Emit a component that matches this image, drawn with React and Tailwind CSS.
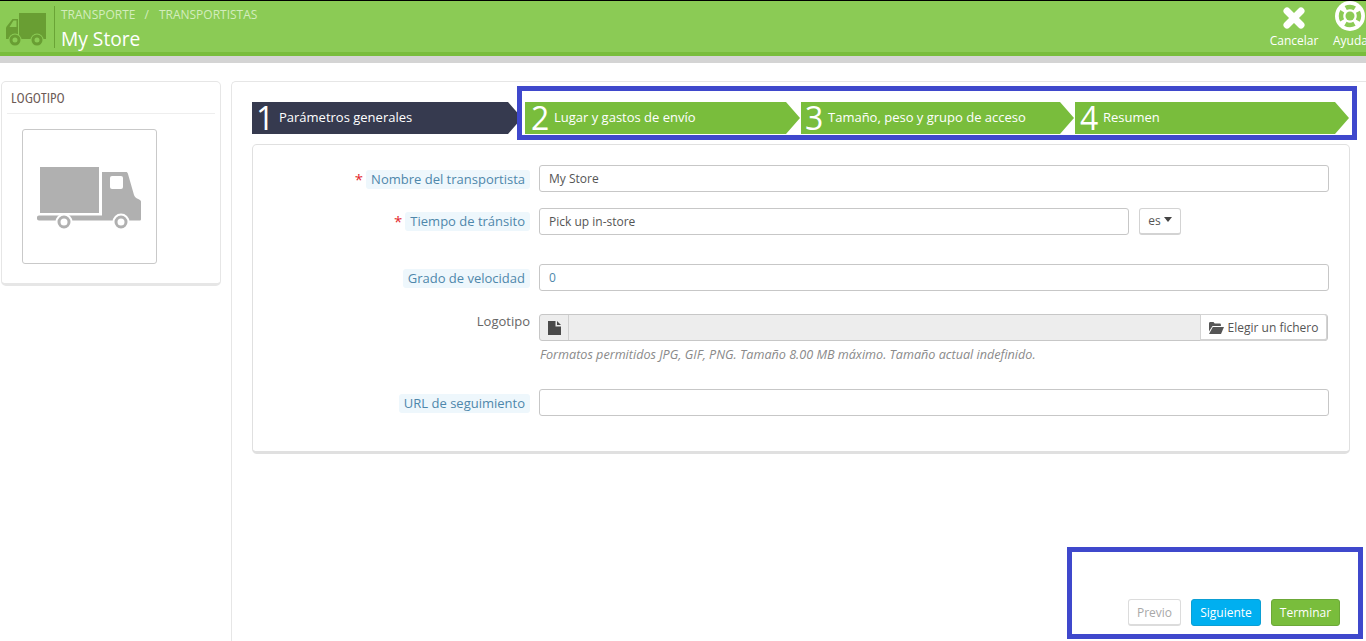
import React from 'react';
import { X } from 'lucide-react';

const Truck = ({ className }) => (
  <svg viewBox="0 0 41 33" className={className}>
    <path fill="#699e33" d="M13 0h27v26H13z" />
    <path fill="#699e33" fillRule="evenodd" d="M12 6H6.500L1 13c-.500.800-1 1.500-1 2.500V26h12V6zM10.500 7.500V14H3.500l4-6.500h3z" />
    <circle cx="9" cy="27" r="6.500" fill="#8bcb55" />
    <circle cx="31" cy="27" r="6.500" fill="#8bcb55" />
    <circle cx="9" cy="27" r="4" fill="none" stroke="#699e33" strokeWidth="3" />
    <circle cx="31" cy="27" r="4" fill="none" stroke="#699e33" strokeWidth="3" />
  </svg>
);

const BigTruck = () => (
  <svg viewBox="0 0 104 64" className="w-[104px] h-[64px] text-[#b0b0b0] mt-[5px] -ml-px" fill="currentColor">
    <path d="M3 0h59v46H3z" />
    <path d="M0 50.500c0-1.200.800-2 2-2h63V5h24c1 0 1.500.500 2 2l6 21c.500 1.500 1.500 2.500 3 3.500 1.500.8 4 1.500 4 3v17.500c0 1-.500 1.500-1.500 1.500H2c-1.200 0-2-.800-2-2z" />
    <rect x="73" y="9" width="13" height="13" rx="2" fill="#fff" />
    <circle cx="27" cy="55" r="8.500" fill="#fff" />
    <circle cx="27" cy="55" r="5" fill="none" stroke="currentColor" strokeWidth="3" />
    <circle cx="84" cy="55" r="8.500" fill="#fff" />
    <circle cx="84" cy="55" r="5" fill="none" stroke="currentColor" strokeWidth="3" />
  </svg>
);

const Buoy = () => (
  <svg viewBox="0 0 30 30" className="w-[30px] h-[30px]">
    <circle cx="15" cy="15" r="15" fill="#fff" />
    <circle cx="15" cy="15" r="9" fill="none" stroke="#8bcb55" strokeWidth="4.500" strokeDasharray="9.500 4.640" strokeDashoffset="4.750" />
    <circle cx="15" cy="15" r="4.500" fill="#8bcb55" />
  </svg>
);

const FileIcon = () => (
  <svg viewBox="0 0 13 14" className="w-[13px] h-[14px]" fill="#4a4a4a">
    <path d="M0 0h7.500v5.500H13V14H0z" />
    <path d="M9 0l4 4H9z" />
  </svg>
);

const FolderIcon = () => (
  <svg viewBox="0 0 15 12" className="w-[15px] h-[12px]" fill="#555">
    <path d="M0 1.500C0 .700.500 0 1.300 0h3.200l1.200 1.500h5c.700 0 1.200.500 1.200 1.200V4H3.500L0 9.500z" />
    <path d="M3.800 5H15l-3 7H0z" />
  </svg>
);

const Step = ({ num, label, dark, className }) => (
  <div
    className={`h-8 flex items-center [clip-path:polygon(0_0,calc(100%-14px)_0,100%_50%,calc(100%-14px)_100%,0_100%)] ${dark ? 'bg-[#363a4f]' : 'bg-[#79bd3c]'} ${className}`}
  >
    <span className="text-[32px] leading-8 text-white w-[23px]">{num}</span>
    <span className="text-[13px] text-white">{label}</span>
  </div>
);

const FieldLabel = ({ required, children, className = '' }) => (
  <div className={`w-[277px] shrink-0 flex justify-end items-center gap-[3px] ${className}`}>
    {required && <span className="text-[#e4282f] text-[15px] leading-none">*</span>}
    <span className="bg-[#eef7fc] text-[#4e87ab] text-[13px] leading-[19px] px-[5px] rounded-[3px]">{children}</span>
  </div>
);

const TextBox = ({ value, className }) => (
  <div className={`h-[27px] border border-[#c7c7c7] rounded-[3px] px-[9px] text-xs leading-[25px] ${className}`}>
    {value}
  </div>
);

const App = () => {
  return (
    <div className="relative w-[1366px] h-[641px] overflow-hidden bg-white font-['Open_Sans',sans-serif]">
      {/* Header */}
      <div className="h-[63px] border-t border-black bg-[#d4d4d4]">
        <div className="h-[55px] bg-[#8bcb55] border-b-4 border-[#79bd3c] flex items-center pl-[6px]">
          <Truck className="w-[41px] h-[33px] mt-[5px]" />
          <div className="ml-[7px] h-[42px] border-l border-[#6aa436] pl-[6px]">
            <div className="flex text-xs leading-4 text-[#d3edbd] mt-[1px]">
              <span>TRANSPORTE</span>
              <span className="ml-[9px] mr-[10px]">/</span>
              <span>TRANSPORTISTAS</span>
            </div>
            <div className="text-[19.2px] leading-[26px] text-white mt-[3px]">My Store</div>
          </div>
          <div className="ml-auto -mr-px flex items-start text-white text-xs leading-4">
            <div className="flex flex-col items-center w-[50px]">
              <X className="w-[28px] h-[28px] -mt-[1px]" strokeWidth={6} />
              <span className="mt-px">Cancelar</span>
            </div>
            <div className="flex flex-col items-center w-[34px] ml-[14px] -mt-[4px]">
              <Buoy />
              <span className="mt-[2px] ml-[1px]">Ayuda</span>
            </div>
          </div>
        </div>
      </div>

      <div className="flex pt-[18px] pl-px h-[578px]">
        {/* Left panel */}
        <div className="w-[220px] h-[205px] shrink-0 border border-[#e6e6e6] border-b-[3px] rounded-[5px] px-[5px]">
          <div className="h-[32px] border-b border-[#eeeeee] pl-[4px] text-[#6c5a56] text-[15px] leading-[30px] [font-stretch:75%]">
            LOGOTIPO
          </div>
          <div className="w-[135px] h-[135px] ml-[15px] mt-[15px] border border-[#c9c9c9] rounded-[3px] flex items-center justify-center">
            <BigTruck />
          </div>
        </div>

        {/* Main panel */}
        <div className="ml-[10px] flex-1 border-l border-t border-[#e6e6e6] rounded-tl-[5px] pl-[20px] pt-[20px] flex flex-col">
          <div className="flex">
            <Step num="1" label="Parámetros generales" dark className="w-[270px] pl-[4px]" />
            <Step num="2" label="Lugar y gastos de envío" className="w-[275px] ml-[3px] pl-[6px]" />
            <Step num="3" label="Tamaño, peso y grupo de acceso" className="w-[273px] ml-[1px] pl-[4px]" />
            <Step num="4" label="Resumen" className="w-[274px] ml-[1px] pl-[5px]" />
          </div>

          <div className="w-[1098px] h-[310px] mt-[10px] border border-[#e0e0e0] border-b-[3px] rounded-[5px] pt-5 flex flex-col">
            <div className="flex items-center h-[27px]">
              <FieldLabel required className="mt-[1px]">Nombre del transportista</FieldLabel>
              <TextBox value="My Store" className="ml-[9px] w-[790px] text-[#555]" />
            </div>
            <div className="flex items-center h-[27px] mt-[16px]">
              <FieldLabel required>Tiempo de tránsito</FieldLabel>
              <TextBox value="Pick up in-store" className="ml-[9px] w-[590px] text-[#555]" />
              <div className="ml-[10px] w-[42px] h-[27px] border border-[#d3d3d3] border-b-[2px] rounded-[3px] flex items-center justify-center text-xs text-[#555] gap-[3px]">
                es
                <span className="w-0 h-0 mb-[3px] border-x-[4px] border-x-transparent border-t-[5px] border-t-[#444]" />
              </div>
            </div>
            <div className="flex items-center h-[27px] mt-[29px]">
              <FieldLabel className="mt-[1px]">Grado de velocidad</FieldLabel>
              <TextBox value="0" className="ml-[9px] w-[790px] text-[#4e87ab]" />
            </div>
            <div className="flex mt-[23px]">
              <div className="w-[277px] shrink-0 text-right text-[13px] leading-[19px] text-[#666] -mt-[2px]">Logotipo</div>
              <div className="ml-[9px]">
                <div className="flex w-[789px] h-[27px] border border-[#c7c7c7] rounded-[3px] bg-[#ededed]">
                  <div className="w-[29px] border-r border-[#d0d0d0] flex items-center justify-center">
                    <FileIcon />
                  </div>
                  <div className="flex-1" />
                  <div className="w-[127px] -my-px pt-px bg-white border border-[#d3d3d3] border-b-[2px] rounded-r-[3px] flex items-center justify-center gap-[4px] text-xs text-[#555]">
                    <FolderIcon />
                    Elegir un fichero
                  </div>
                </div>
                <div className="mt-[6px] text-[12.6px] leading-4 italic text-[#8a8a8a] pl-px">
                  Formatos permitidos JPG, GIF, PNG. Tamaño 8.00 MB máximo. Tamaño actual indefinido.
                </div>
              </div>
            </div>
            <div className="flex items-center h-[27px] mt-[26px]">
              <FieldLabel className="mt-[1px]">URL de seguimiento</FieldLabel>
              <TextBox className="ml-[9px] w-[790px]" />
            </div>
          </div>

          <div className="mt-[145px] flex justify-end gap-[10px] pr-[26px] text-xs">
            <div className="w-[53px] h-[27px] pt-px border border-[#dcdcdc] border-b-[2px] rounded-[3px] text-[#a8a8a8] flex items-center justify-center">Previo</div>
            <div className="w-[70px] h-[27px] pt-px border border-[#0b9fd4] rounded-[3px] bg-[#00aff0] text-white flex items-center justify-center">Siguiente</div>
            <div className="w-[69px] h-[27px] pt-px border border-[#6ca838] rounded-[3px] bg-[#79bd3c] text-white flex items-center justify-center">Terminar</div>
          </div>
        </div>
      </div>

      {/* Annotation boxes drawn over the screenshot */}
      <div className="absolute left-[517px] top-[86px] w-[840px] h-[54px] border-[5px] border-[#3f48cc]" />
      <div className="absolute left-[1067px] top-[547px] w-[296px] h-[92px] border-[5px] border-[#3f48cc]" />
    </div>
  );
};

export default App;
